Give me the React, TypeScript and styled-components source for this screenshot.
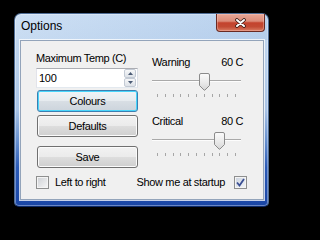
import * as React from "react";
import styled, { createGlobalStyle } from "styled-components";

const GlobalStyle = createGlobalStyle`
  html, body {
    margin: 0;
    padding: 0;
    background: #000;
  }
  body {
    width: 286px;
    height: 224px;
    overflow: hidden;
    font-family: "Liberation Sans", Arial, sans-serif;
  }
`;

const Screen = styled.div`
  width: 286px;
  height: 224px;
  box-sizing: border-box;
  padding: 13px 0 0 14px;
`;

const Window = styled.div`
  width: 255px;
  height: 194px;
  box-sizing: border-box;
  display: flex;
  flex-direction: column;
  border: 1px solid #4f6d95;
  border-bottom-color: #0d2a69;
  border-radius: 7px 7px 5px 5px;
  background: linear-gradient(
    180deg,
    #c6dbf2 0%,
    #b8d0ec 30%,
    #a8c3e6 50%,
    #6690cf 66%,
    #2a5ab6 80%,
    #1a46a5 100%
  );
  box-shadow: inset 0 0 0 1px rgba(255, 255, 255, 0.35);
`;

const TitleBar = styled.div`
  height: 26px;
  display: flex;
  justify-content: space-between;
  align-items: flex-start;
  padding: 0 3px 0 6px;
  background: linear-gradient(90deg, rgba(255, 255, 255, 0.12), rgba(120, 160, 215, 0.15));
  border-radius: 6px 6px 0 0;
`;

const Title = styled.span`
  padding-top: 5px;
  font-size: 12px;
  line-height: 15px;
  color: #000;
`;

const CloseButton = styled.div`
  width: 49px;
  height: 18px;
  box-sizing: border-box;
  display: flex;
  align-items: center;
  justify-content: center;
  border: 1px solid #6a2a22;
  border-top: none;
  border-radius: 0 0 4px 4px;
  background: linear-gradient(
    180deg,
    #e9a796 0%,
    #dc8c79 42%,
    #c4432d 52%,
    #c24a33 75%,
    #da7d63 100%
  );
  box-shadow: inset 0 0 0 1px rgba(255, 210, 200, 0.35);
`;

const Client = styled.div`
  height: 160px;
  margin: 0 4px 0 5px;
  box-sizing: border-box;
  border: 1px solid #93a4ba;
  background: #f0f0f0;
  box-shadow: 0 0 0 1px rgba(255, 255, 255, 0.75);
  padding: 0 20px 0 15px;
  display: flex;
  flex-direction: column;
`;

const Columns = styled.div`
  display: grid;
  grid-template-columns: 102px 91px;
  column-gap: 14px;
  align-items: start;
`;

const LeftColumn = styled.div`
  display: flex;
  flex-direction: column;
  padding-top: 11px;
`;

const RightColumn = styled.div`
  display: flex;
  flex-direction: column;
  padding-top: 15px;
`;

const Label = styled.span`
  font-size: 11px;
  line-height: 13px;
  letter-spacing: -0.35px;
  color: #000;
  white-space: nowrap;
`;

const SpinBox = styled.div`
  margin-top: 3px;
  height: 20px;
  box-sizing: border-box;
  display: flex;
  align-items: stretch;
  border: 1px solid;
  border-color: #abadb3 #dbdfe6 #e3e9ef #e2e3ea;
  background: #fff;
`;

const SpinInput = styled.input`
  flex: 1;
  min-width: 0;
  border: none;
  outline: none;
  padding: 0 0 0 2px;
  margin: 0;
  font-family: "Liberation Sans", Arial, sans-serif;
  font-size: 11px;
  letter-spacing: -0.3px;
  color: #000;
  background: transparent;
`;

const SpinButtons = styled.div`
  width: 12px;
  margin: 0 1px 0 0;
  display: flex;
  flex-direction: column;
`;

const SpinButton = styled.div`
  flex: 1;
  display: flex;
  align-items: center;
  justify-content: center;
  box-sizing: border-box;
  border: 1px solid #c3cad4;
  border-radius: 2px;
  background: linear-gradient(180deg, #f7f8f9 0%, #e8ebef 55%, #dde2e8 100%);
`;

const PushButton = styled.button<{ $focused?: boolean; $gap: number }>`
  margin: ${(p) => p.$gap}px 0 0 1px;
  width: 101px;
  height: 22px;
  box-sizing: border-box;
  padding: 0;
  font-family: "Liberation Sans", Arial, sans-serif;
  font-size: 11px;
  letter-spacing: -0.3px;
  color: #000;
  border-radius: 3px;
  border: 1px solid ${(p) => (p.$focused ? "#3c7fb1" : "#707070")};
  box-shadow: inset 0 0 0 1px ${(p) => (p.$focused ? "#48d5fb" : "#fbfbfb")};
  background: ${(p) =>
    p.$focused
      ? "linear-gradient(180deg, #f0f4f7 0%, #e6ebef 48%, #d8dee4 52%, #ccd4dc 100%)"
      : "linear-gradient(180deg, #f2f2f2 0%, #ebebeb 48%, #dddddd 52%, #cfcfcf 100%)"};
`;

const ValueRow = styled.div<{ $gap: number }>`
  margin-top: ${(p) => p.$gap}px;
  display: flex;
  justify-content: space-between;
`;

const Slider = styled.div`
  position: relative;
  margin-top: 3px;
  width: 89px;
  height: 27px;
  box-sizing: border-box;
  padding-top: 8px;
`;

const Track = styled.div`
  height: 0;
  border-top: 1px solid #a9a9a9;
  border-bottom: 1px solid #fdfdfd;
`;

const Ticks = styled.div`
  margin-top: 12px;
  padding: 0 5px;
  display: flex;
  justify-content: space-between;
`;

const Tick = styled.span`
  width: 1px;
  height: 3px;
  background: #a6a6a6;
`;

const Thumb = styled.svg`
  position: absolute;
  top: 1px;
`;

const BottomRow = styled.div`
  margin: 8px -4px 0 0;
  height: 13px;
  display: flex;
  align-items: center;
  justify-content: space-between;
`;

const CheckOption = styled.label`
  display: flex;
  align-items: center;
  gap: 6px;
`;

const CheckOptionRight = styled(CheckOption)`
  gap: 9px;
`;

const CheckBox = styled.span<{ $checked?: boolean }>`
  width: 13px;
  height: 13px;
  box-sizing: border-box;
  display: flex;
  align-items: center;
  justify-content: center;
  border: 1px solid #8e8f8f;
  box-shadow: inset 0 0 0 1px #f4f4f4;
  background: ${(p) =>
    p.$checked
      ? "linear-gradient(135deg, #c9d1dd 0%, #e4e8ee 60%, #f5f6f8 100%)"
      : "linear-gradient(135deg, #cdd0d4 0%, #e6e7e9 60%, #f7f7f7 100%)"};
`;

const TICKS = Array.from({ length: 11 }, (_, i) => i);

const TrackBar: React.FC<{ value: number }> = ({ value }) => {
  const left = Math.round((value / 100) * 78);
  return (
    <Slider>
      <Track />
      <Ticks>
        {TICKS.map((i) => (
          <Tick key={i} />
        ))}
      </Ticks>
      <Thumb width="11" height="18" viewBox="0 0 11 18" style={{ left }}>
        <defs>
          <linearGradient id={`thumb${value}`} x1="0" y1="0" x2="0" y2="1">
            <stop offset="0" stopColor="#fbfbfb" />
            <stop offset="0.5" stopColor="#ececec" />
            <stop offset="1" stopColor="#d6d6d6" />
          </linearGradient>
        </defs>
        <path
          d="M0.5 2 Q0.5 0.5 2 0.5 H9 Q10.5 0.5 10.5 2 V12.5 L6 17 Q5.5 17.5 5 17 L0.5 12.5 Z"
          fill={`url(#thumb${value})`}
          stroke="#8b8b8b"
        />
      </Thumb>
    </Slider>
  );
};

const Arrow: React.FC<{ up?: boolean }> = ({ up }) => (
  <svg width="5" height="3" viewBox="0 0 5 3">
    <path d={up ? "M0 3 L2.5 0 L5 3 Z" : "M0 0 L5 0 L2.5 3 Z"} fill="#4a5a74" />
  </svg>
);

const App: React.FC = () => (
  <Screen>
    <GlobalStyle />
    <Window>
      <TitleBar>
        <Title>Options</Title>
        <CloseButton>
          <svg width="11" height="10" viewBox="0 0 11 10">
            <path d="M2 2 L9 8 M9 2 L2 8" stroke="#3a1a14" strokeWidth="3.6" strokeLinecap="round" />
            <path d="M2 2 L9 8 M9 2 L2 8" stroke="#fff" strokeWidth="2" strokeLinecap="round" />
          </svg>
        </CloseButton>
      </TitleBar>
      <Client>
        <Columns>
          <LeftColumn>
            <Label>Maximum Temp (C)</Label>
            <SpinBox>
              <SpinInput value="100" readOnly />
              <SpinButtons>
                <SpinButton>
                  <Arrow up />
                </SpinButton>
                <SpinButton>
                  <Arrow />
                </SpinButton>
              </SpinButtons>
            </SpinBox>
            <PushButton $focused $gap={2}>
              Colours
            </PushButton>
            <PushButton $gap={3}>Defaults</PushButton>
            <PushButton $gap={9}>Save</PushButton>
          </LeftColumn>
          <RightColumn>
            <ValueRow $gap={0}>
              <Label>Warning</Label>
              <Label>60 C</Label>
            </ValueRow>
            <TrackBar value={60} />
            <ValueRow $gap={16}>
              <Label>Critical</Label>
              <Label>80 C</Label>
            </ValueRow>
            <TrackBar value={80} />
          </RightColumn>
        </Columns>
        <BottomRow>
          <CheckOption>
            <CheckBox />
            <Label>Left to right</Label>
          </CheckOption>
          <CheckOptionRight>
            <Label>Show me at startup</Label>
            <CheckBox $checked>
              <svg width="9" height="9" viewBox="0 0 9 9">
                <path d="M1 4.5 L3.5 7.5 L8 1" fill="none" stroke="#3b4f93" strokeWidth="1.8" />
              </svg>
            </CheckBox>
          </CheckOptionRight>
        </BottomRow>
      </Client>
    </Window>
  </Screen>
);

export default App;
